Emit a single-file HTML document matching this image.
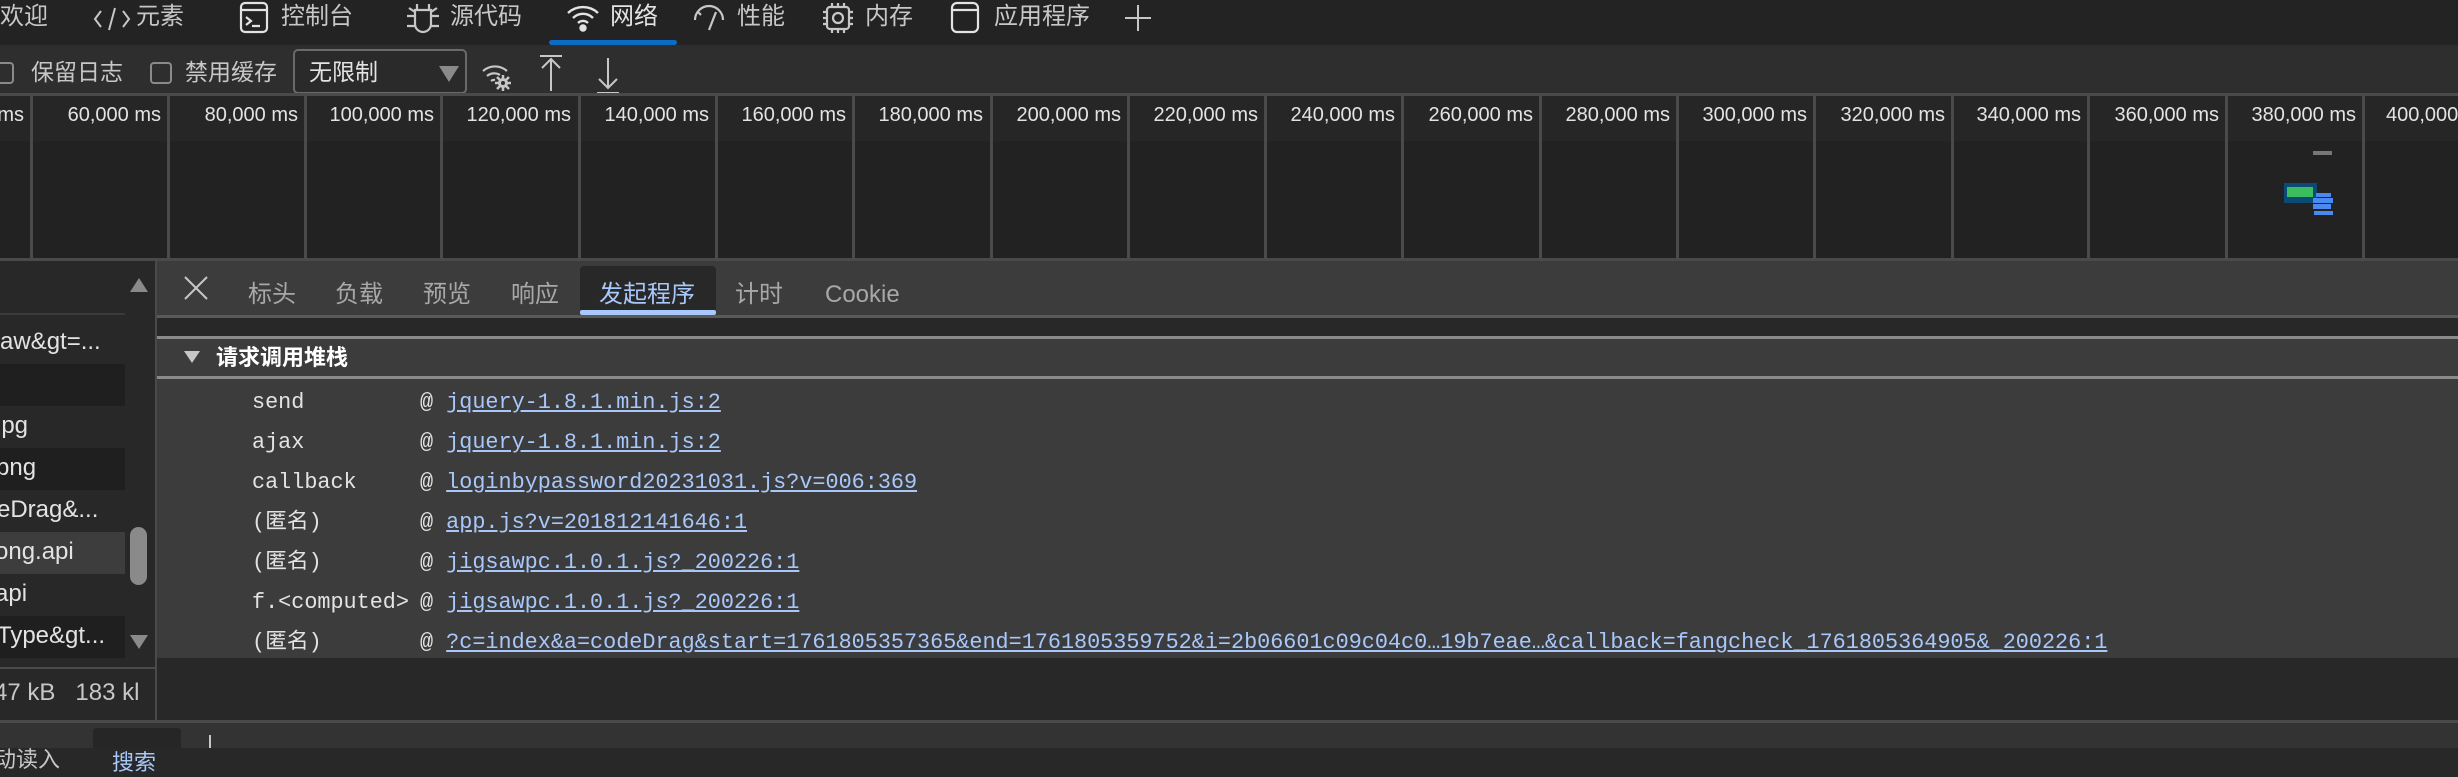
<!DOCTYPE html>
<html><head><meta charset="utf-8">
<style>
*{margin:0;padding:0;box-sizing:border-box}
body{width:2458px;height:748px;overflow:hidden;background:#282828;position:relative;font-family:"Liberation Sans","Noto Sans CJK SC",sans-serif;color:#c7c7c7}
.a{position:absolute;white-space:nowrap}
.t{font-size:24px;line-height:30px}
.mono{font-family:"Liberation Mono","Noto Sans CJK SC",monospace;font-size:21.8px;line-height:30px;color:#e3e3e3}
.lnk{color:#a8c7fa;text-decoration:underline}
.vl{position:absolute;top:96px;width:3px;height:163px;background:#4a4a4a}
.lab{position:absolute;top:104px;font-size:20px;color:#e3e3e3;text-align:right;width:160px}
.li{position:absolute;font-size:24px;color:#e3e3e3;white-space:nowrap}
svg{position:absolute;overflow:visible}
</style></head><body>
<div class="a" style="left:0;top:0;width:2458px;height:45px;background:#232323"></div>
<div class="a t" style="left:0;top:2px">欢迎</div>
<svg style="left:92px;top:6px" width="40" height="26" fill="none" stroke="#c7c7c7" stroke-width="2"><path d="M9 5 3 13 9 21M31 5 37 13 31 21M23 2 17 24"/></svg>
<div class="a t" style="left:136px;top:2px">元素</div>
<svg style="left:240px;top:2px" width="30" height="32" fill="none" stroke="#e3e3e3" stroke-width="2.2"><rect x="1" y="1" width="26" height="29" rx="4"/><path d="M1 8H27M6 15l5 4-5 4M12 24h8"/></svg>
<div class="a t" style="left:281px;top:2px">控制台</div>
<svg style="left:405px;top:2px" width="36" height="32" fill="none" stroke="#c7c7c7" stroke-width="2.2"><path d="M12 2v5M24 2v5M10 8h16v14a8 8 0 0 1-16 0zM2 14h8M26 14h8M2 24h8M26 24h8M4 6l6 4M32 6l-6 4"/></svg>
<div class="a t" style="left:450px;top:2px">源代码</div>
<svg style="left:566px;top:4px" width="34" height="28" fill="none" stroke="#e3e3e3" stroke-width="2.4"><path d="M2 9a22 22 0 0 1 30 0M7 14a14 14 0 0 1 20 0M12 19a7 7 0 0 1 10 0"/><circle cx="17" cy="24" r="2.5" fill="#e3e3e3"/></svg>
<div class="a t" style="left:610px;top:2px;color:#e3e3e3">网络</div>
<div class="a" style="left:549px;top:40px;width:128px;height:5px;background:#0b6cc4;border-radius:3px"></div>
<svg style="left:692px;top:4px" width="34" height="28" fill="none" stroke="#c7c7c7" stroke-width="2.2"><path d="M3 16a14 14 0 0 1 28 0M17 26l7-18M6 8l3 3"/></svg>
<div class="a t" style="left:737px;top:2px">性能</div>
<svg style="left:822px;top:2px" width="32" height="32" fill="none" stroke="#c7c7c7" stroke-width="2.2"><rect x="5" y="5" width="22" height="22" rx="3"/><circle cx="16" cy="16" r="5"/><path d="M1 10h4M1 16h4M1 22h4M27 10h4M27 16h4M27 22h4M10 1v4M16 1v4M22 1v4M10 27v4M16 27v4M22 27v4"/></svg>
<div class="a t" style="left:865px;top:2px">内存</div>
<svg style="left:951px;top:2px" width="30" height="32" fill="none" stroke="#e3e3e3" stroke-width="2.2"><rect x="1" y="1" width="26" height="29" rx="5"/><path d="M1 8H27"/></svg>
<div class="a t" style="left:994px;top:2px">应用程序</div>
<svg style="left:1124px;top:4px" width="28" height="28" stroke="#c7c7c7" stroke-width="2"><path d="M14 1v26M1 14h26"/></svg>
<div class="a" style="left:0;top:45px;width:2458px;height:49px;background:#2e2e2e"></div>
<div class="a" style="left:-8px;top:62px;width:22px;height:22px;border:2px solid #8a8a8a;border-radius:4px"></div>
<div class="a t" style="left:31px;top:57px;font-size:23px;color:#c7c7c7">保留日志</div>
<div class="a" style="left:150px;top:62px;width:22px;height:22px;border:2px solid #8a8a8a;border-radius:4px"></div>
<div class="a t" style="left:185px;top:57px;font-size:23px;color:#c7c7c7">禁用缓存</div>
<div class="a" style="left:293px;top:49px;width:174px;height:45px;border:2px solid #6a6a6a;border-radius:5px;background:#2a2a2a"></div>
<div class="a t" style="left:309px;top:57px;font-size:23px;color:#e3e3e3">无限制</div>
<svg style="left:439px;top:66px" width="20" height="16"><path d="M0 0h20L10 16z" fill="#8a8a8a"/></svg>
<svg style="left:481px;top:61px" width="32" height="30" fill="none" stroke="#c7c7c7" stroke-width="2.2"><path d="M2 10a18 18 0 0 1 24 0M6 15a11 11 0 0 1 13 -1M10 20a5 5 0 0 1 4 -1"/><circle cx="22" cy="22" r="5" fill="#c7c7c7" stroke="none"/><path d="M22 14v16M14 22h16M16 16l12 12M28 16 16 28" stroke-width="2.5"/><circle cx="22" cy="22" r="2" fill="#2e2e2e" stroke="none"/></svg>
<svg style="left:539px;top:55px" width="24" height="36" fill="none" stroke="#c7c7c7" stroke-width="2"><path d="M1 1h22M12 36V4M3 13l9-9 9 9"/></svg>
<svg style="left:596px;top:58px" width="24" height="36" fill="none" stroke="#c7c7c7" stroke-width="2"><path d="M1 35h22M12 0v30M3 21l9 9 9-9"/></svg>
<div class="a" style="left:0;top:93px;width:2458px;height:3px;background:#4a4a4a"></div>
<div class="a" style="left:0;top:96px;width:2458px;height:45px;background:#262626"></div>
<div class="a" style="left:0;top:141px;width:2458px;height:118px;background:#222"></div>
<div class="vl" style="left:30px"></div><div class="vl" style="left:167px"></div><div class="vl" style="left:304px"></div><div class="vl" style="left:440px"></div><div class="vl" style="left:578px"></div><div class="vl" style="left:715px"></div><div class="vl" style="left:852px"></div><div class="vl" style="left:990px"></div><div class="vl" style="left:1127px"></div><div class="vl" style="left:1264px"></div><div class="vl" style="left:1401px"></div><div class="vl" style="left:1539px"></div><div class="vl" style="left:1676px"></div><div class="vl" style="left:1813px"></div><div class="vl" style="left:1951px"></div><div class="vl" style="left:2087px"></div><div class="vl" style="left:2225px"></div><div class="vl" style="left:2362px"></div>
<div class="lab" style="left:-136px">ms</div>
<div class="lab" style="left:1px">60,000 ms</div>
<div class="lab" style="left:138px">80,000 ms</div>
<div class="lab" style="left:274px">100,000 ms</div>
<div class="lab" style="left:411px">120,000 ms</div>
<div class="lab" style="left:549px">140,000 ms</div>
<div class="lab" style="left:686px">160,000 ms</div>
<div class="lab" style="left:823px">180,000 ms</div>
<div class="lab" style="left:961px">200,000 ms</div>
<div class="lab" style="left:1098px">220,000 ms</div>
<div class="lab" style="left:1235px">240,000 ms</div>
<div class="lab" style="left:1373px">260,000 ms</div>
<div class="lab" style="left:1510px">280,000 ms</div>
<div class="lab" style="left:1647px">300,000 ms</div>
<div class="lab" style="left:1785px">320,000 ms</div>
<div class="lab" style="left:1921px">340,000 ms</div>
<div class="lab" style="left:2059px">360,000 ms</div>
<div class="lab" style="left:2196px">380,000 ms</div>
<div class="a" style="left:2386px;top:104px;font-size:20px;color:#e3e3e3">400,000 ms</div>
<div class="a" style="left:2313px;top:151px;width:19px;height:4px;background:#777"></div>
<div class="a" style="left:2284px;top:183px;width:33px;height:20px;background:#0b4a74"></div>
<div class="a" style="left:2287px;top:187px;width:26px;height:10px;background:#3bbc5f"></div>
<div class="a" style="left:2316px;top:193px;width:15px;height:4px;background:#4a8af0"></div>
<div class="a" style="left:2313px;top:198px;width:20px;height:5px;background:#4a8af0"></div>
<div class="a" style="left:2313px;top:204px;width:18px;height:5px;background:#4a8af0"></div>
<div class="a" style="left:2314px;top:211px;width:19px;height:4px;background:#4a8af0"></div>
<div class="a" style="left:0;top:258px;width:2458px;height:3px;background:#4a4a4a"></div>
<div class="a" style="left:0;top:261px;width:155px;height:460px;background:#282828"></div>
<div class="a" style="left:0;top:313px;width:125px;height:2px;background:#3a3a3a"></div>
<div class="a" style="left:0;top:322px;width:125px;height:42px;background:#282828"></div>
<div class="a" style="left:0;top:364px;width:125px;height:42px;background:#1f1f1f"></div>
<div class="a" style="left:0;top:406px;width:125px;height:42px;background:#282828"></div>
<div class="a" style="left:0;top:448px;width:125px;height:42px;background:#1f1f1f"></div>
<div class="a" style="left:0;top:490px;width:125px;height:42px;background:#282828"></div>
<div class="a" style="left:0;top:532px;width:125px;height:42px;background:#3d3d3d"></div>
<div class="a" style="left:0;top:574px;width:125px;height:42px;background:#282828"></div>
<div class="a" style="left:0;top:616px;width:125px;height:42px;background:#1f1f1f"></div>
<div class="li" style="left:0;top:328px">aw&amp;gt=...</div>
<div class="li" style="left:-4px;top:412px">jpg</div>
<div class="li" style="left:-4px;top:454px">png</div>
<div class="li" style="left:-3px;top:496px">eDrag&amp;...</div>
<div class="li" style="left:-5px;top:538px">ong.api</div>
<div class="li" style="left:-5px;top:580px">api</div>
<div class="li" style="left:-3px;top:622px">Type&amp;gt...</div>
<svg style="left:130px;top:278px" width="18" height="14"><path d="M9 0 18 14H0z" fill="#8a8a8a"/></svg>
<svg style="left:130px;top:635px" width="18" height="14"><path d="M0 0h18L9 14z" fill="#8a8a8a"/></svg>
<div class="a" style="left:130px;top:527px;width:17px;height:58px;background:#8a8a8a;border-radius:9px"></div>
<div class="a" style="left:0;top:667px;width:155px;height:2px;background:#4a4a4a"></div>
<div class="li" style="left:-6px;top:679px;color:#c7c7c7">47 kB&nbsp;&nbsp; 183 kl</div>
<div class="a" style="left:155px;top:261px;width:2px;height:460px;background:#4a4a4a"></div>
<div class="a" style="left:157px;top:261px;width:2301px;height:54px;background:#3c3c3c"></div>
<svg style="left:184px;top:276px" width="24" height="24" stroke="#c7c7c7" stroke-width="2"><path d="M1 1l22 22M23 1 1 23"/></svg>
<div class="a t" style="left:248px;top:280px;color:#a8a8a8">标头</div>
<div class="a t" style="left:335px;top:280px;color:#a8a8a8">负载</div>
<div class="a t" style="left:423px;top:280px;color:#a8a8a8">预览</div>
<div class="a t" style="left:511px;top:280px;color:#a8a8a8">响应</div>
<div class="a" style="left:580px;top:266px;width:136px;height:52px;background:#282828;border-radius:4px 4px 0 0"></div>
<div class="a" style="left:580px;top:310px;width:136px;height:5px;background:#a8c7fa;border-radius:2px"></div>
<div class="a t" style="left:599px;top:280px;color:#a8c7fa">发起程序</div>
<div class="a t" style="left:735px;top:280px;color:#a8a8a8">计时</div>
<div class="a t" style="left:825px;top:280px;color:#a8a8a8">Cookie</div>
<div class="a" style="left:157px;top:315px;width:2301px;height:3px;background:#5a5a5a"></div>
<div class="a" style="left:157px;top:318px;width:2301px;height:19px;background:#282828"></div>
<div class="a" style="left:157px;top:336px;width:2301px;height:3px;background:#8a8a8a"></div>
<div class="a" style="left:157px;top:339px;width:2301px;height:37px;background:#3c3c3c"></div>
<svg style="left:184px;top:351px" width="16" height="12"><path d="M0 0h16L8 12z" fill="#c7c7c7"/></svg>
<div class="a" style="left:216px;top:343px;font-size:22px;font-weight:bold;color:#fff;line-height:30px">请求调用堆栈</div>
<div class="a" style="left:157px;top:376px;width:2301px;height:3px;background:#8a8a8a"></div>
<div class="a" style="left:157px;top:379px;width:2301px;height:279px;background:#3c3c3c"></div>
<div class="a" style="left:157px;top:658px;width:2301px;height:63px;background:#282828"></div>
<div class="a mono" style="left:252px;top:388px">send</div><div class="a mono" style="left:420px;top:388px">@ <span class="lnk">jquery-1.8.1.min.js:2</span></div>
<div class="a mono" style="left:252px;top:428px">ajax</div><div class="a mono" style="left:420px;top:428px">@ <span class="lnk">jquery-1.8.1.min.js:2</span></div>
<div class="a mono" style="left:252px;top:468px">callback</div><div class="a mono" style="left:420px;top:468px">@ <span class="lnk">loginbypassword20231031.js?v=006:369</span></div>
<div class="a mono" style="left:252px;top:508px">(匿名)</div><div class="a mono" style="left:420px;top:508px">@ <span class="lnk">app.js?v=201812141646:1</span></div>
<div class="a mono" style="left:252px;top:548px">(匿名)</div><div class="a mono" style="left:420px;top:548px">@ <span class="lnk">jigsawpc.1.0.1.js?_200226:1</span></div>
<div class="a mono" style="left:252px;top:588px">f.&lt;computed&gt;</div><div class="a mono" style="left:420px;top:588px">@ <span class="lnk">jigsawpc.1.0.1.js?_200226:1</span></div>
<div class="a mono" style="left:252px;top:628px">(匿名)</div><div class="a mono" style="left:420px;top:628px">@ <span class="lnk">?c=index&amp;a=codeDrag&amp;start=1761805357365&amp;end=1761805359752&amp;i=2b06601c09c04c0…19b7eae…&amp;callback=fangcheck_1761805364905&amp;_200226:1</span></div>
<div class="a" style="left:0;top:720px;width:2458px;height:3px;background:#4a4a4a"></div>
<div class="a" style="left:0;top:723px;width:2458px;height:25px;background:#333"></div>
<div class="a" style="left:93px;top:728px;width:88px;height:20px;background:#262626;border-radius:4px 4px 0 0"></div>
<div class="a" style="left:-6px;top:742px;font-size:22px;color:#c7c7c7">动读入</div>
<div class="a" style="left:112px;top:745px;font-size:22px;color:#a8c7fa">搜索</div>
<div class="a" style="left:209px;top:735px;width:2px;height:13px;background:#c7c7c7"></div>
</body></html>
